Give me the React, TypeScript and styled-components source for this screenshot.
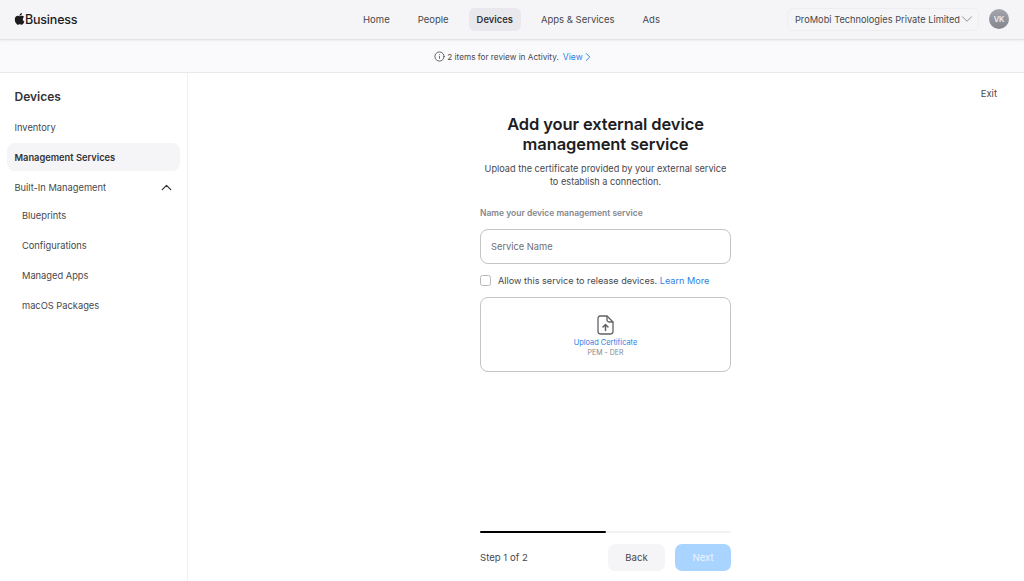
import React from 'react';
import styled, { createGlobalStyle } from 'styled-components';
import { ChevronDown, ChevronRight, ChevronUp, Info } from 'lucide-react';

const GlobalStyle = createGlobalStyle`
  html, body {
    margin: 0;
    height: 100%;
    background: #fff;
  }
  #root {
    height: 100%;
  }
  * {
    box-sizing: border-box;
  }
  body {
    font-family: Inter, "Liberation Sans", sans-serif;
    color: #1d1d1f;
  }
`;

const Page = styled.div`
  display: flex;
  flex-direction: column;
  height: 581px;
  overflow: hidden;
`;

const Header = styled.header`
  flex: 0 0 40px;
  display: grid;
  grid-template-columns: 1fr auto 1fr;
  align-items: center;
  padding: 0 15px 1px 14px;
  background: #f5f5f7;
  border-bottom: 1px solid #e2e2e5;
  box-shadow: 0 1px 2px rgba(0, 0, 0, 0.06);
  position: relative;
  z-index: 1;
`;

const Logo = styled.div`
  display: flex;
  align-items: center;
  font-size: 12.5px;
  font-weight: 500;
  letter-spacing: -0.2px;
  color: #1d1d1f;
`;

const Nav = styled.nav`
  display: flex;
  align-items: center;
`;

const NavItem = styled.a<{ $active?: boolean }>`
  display: flex;
  align-items: center;
  height: 23px;
  padding: 0 8px;
  margin: 0 6px;
  border-radius: 6px;
  font-size: ${(p) => (p.$active ? '9.4px' : '9.5px')};
  font-weight: ${(p) => (p.$active ? 600 : 400)};
  color: ${(p) => (p.$active ? '#333336' : '#48484c')};
  background: ${(p) => (p.$active ? '#e8e8ed' : 'transparent')};
`;

const HeaderRight = styled.div`
  display: flex;
  align-items: center;
  justify-content: flex-end;
  gap: 10px;
`;

const OrgPicker = styled.div`
  display: flex;
  align-items: center;
  height: 23px;
  padding: 0 2.5px 0 7px;
  border: 1px solid #eeeef0;
  border-radius: 6px;
  font-size: 9.25px;
  color: #48484c;
`;

const OrgChevron = styled(ChevronDown)`
  margin-left: -2.5px;
`;

const Avatar = styled.div`
  display: flex;
  align-items: center;
  justify-content: center;
  width: 20px;
  height: 20px;
  border-radius: 50%;
  background: linear-gradient(#a5a5ad, #84848c);
  color: #f0f0f2;
  font-size: 7.5px;
  font-weight: 600;
`;

const Banner = styled.div`
  flex: 0 0 33px;
  display: flex;
  align-items: center;
  justify-content: center;
  gap: 3px;
  padding-top: 1px;
  background: #fafafc;
  border-bottom: 1px solid #e8e8ed;
  font-size: 8.2px;
  color: #48484c;
`;

const BannerInfo = styled(Info)`
  margin-right: -1px;
`;

const BannerLink = styled.a`
  display: inline-flex;
  align-items: center;
  margin-left: 1px;
  font-size: 8.6px;
  color: #2d7fe6;
`;

const BannerChevron = styled(ChevronRight)`
  margin: 0 -5px 0 -2px;
`;

const Body = styled.div`
  flex: 1;
  display: flex;
  min-height: 0;
`;

const Sidebar = styled.aside`
  flex: 0 0 188px;
  display: flex;
  flex-direction: column;
  padding: 15px 7px 0;
  border-right: 1px solid #f0f0f2;
`;

const SideTitle = styled.h2`
  margin: 0 0 8px 7.5px;
  font-size: 12px;
  line-height: 17px;
  font-weight: 600;
  color: #333336;
`;

const SideItem = styled.a<{ $active?: boolean; $nested?: boolean }>`
  display: flex;
  align-items: center;
  justify-content: space-between;
  height: 28px;
  margin-bottom: 2px;
  padding: 0 8px 0 ${(p) => (p.$nested ? '15px' : '7.5px')};
  border-radius: 8px;
  font-size: 9.3px;
  font-weight: ${(p) => (p.$active ? 600 : 400)};
  color: ${(p) => (p.$active ? '#333336' : '#48484c')};
  background: ${(p) => (p.$active ? '#f5f5f7' : 'transparent')};
`;

const SideChevron = styled(ChevronUp)`
  margin-right: -3px;
`;

const SubList = styled.div`
  display: flex;
  flex-direction: column;
  margin-top: -2px;
`;

const Main = styled.main`
  flex: 1;
  display: flex;
  flex-direction: column;
  align-items: center;
  min-width: 0;
  padding-right: 1px;
`;

const ExitRow = styled.div`
  align-self: stretch;
  display: flex;
  justify-content: flex-end;
  padding: 14px 26px 0 0;
  font-size: 9.5px;
  line-height: 13px;
  color: #48484c;
`;

const Form = styled.div`
  flex: 1;
  display: flex;
  flex-direction: column;
  width: 251px;
  padding-top: 14px;
`;

const Title = styled.h1`
  margin: 0 0 8px;
  text-align: center;
  font-size: 16.5px;
  line-height: 20px;
  font-weight: 600;
  letter-spacing: -0.1px;
  color: #1d1d1f;
`;

const Subtitle = styled.p`
  margin: 0 0 19px;
  text-align: center;
  font-size: 9.2px;
  line-height: 13px;
  color: #48484c;
`;

const FieldLabel = styled.label`
  margin-bottom: 10px;
  font-size: 8.5px;
  line-height: 12px;
  font-weight: 600;
  color: #86868b;
`;

const TextBox = styled.div`
  display: flex;
  align-items: center;
  height: 35px;
  padding: 0 10px;
  border: 1px solid #c3c3c8;
  border-radius: 8px;
  font-size: 9.3px;
  color: #6e6e73;
`;

const CheckRow = styled.div`
  display: flex;
  align-items: center;
  gap: 7px;
  margin: 10px 0;
  height: 13px;
  font-size: 9.15px;
  color: #48484c;
`;

const CheckBox = styled.span`
  flex: 0 0 11px;
  height: 11px;
  border: 1px solid #b8b8bd;
  border-radius: 2.5px;
`;

const BlueLink = styled.a`
  color: #2d7fe6;
`;

const UploadBox = styled.div`
  display: flex;
  flex-direction: column;
  align-items: center;
  height: 75px;
  padding-top: 17px;
  border: 1px solid #c3c3c8;
  border-radius: 8px;
`;

const UploadLink = styled.a`
  margin-top: 3px;
  font-size: 7.4px;
  line-height: 10px;
  color: #2d7fe6;
`;

const UploadHint = styled.span`
  font-size: 7px;
  line-height: 10px;
  color: #86868b;
`;

const Footer = styled.div`
  margin-top: auto;
  padding-bottom: 10px;
`;

const Progress = styled.div`
  height: 2px;
  margin-bottom: 11px;
  background: #f2f2f4;
  border-radius: 1px;
`;

const ProgressFill = styled.div`
  width: 50%;
  height: 100%;
  background: #000;
  border-radius: 1px;
`;

const FooterRow = styled.div`
  display: flex;
  align-items: center;
`;

const StepText = styled.span`
  margin-right: auto;
  font-size: 9.6px;
  color: #48484c;
`;

const Button = styled.button<{ $primary?: boolean }>`
  width: ${(p) => (p.$primary ? '56px' : '57px')};
  height: 27px;
  margin-left: ${(p) => (p.$primary ? '10px' : '0')};
  border: 0;
  border-radius: 7px;
  font-family: inherit;
  font-size: 9.6px;
  color: ${(p) => (p.$primary ? '#eaf4ff' : '#48484c')};
  background: ${(p) => (p.$primary ? '#a9d4ff' : '#f5f5f7')};
`;

const AppleLogo = () => (
  <svg width="11" height="12" viewBox="0 0 814 1000" fill="#1d1d1f" aria-hidden="true">
    <path d="M788 341c-6 4-106 61-106 186 0 145 127 196 131 197-1 3-20 70-67 138-42 60-86 120-152 120s-84-39-161-39c-75 0-101 40-162 40s-103-56-152-125C62 778 16 652 16 532c0-192 125-294 248-294 65 0 120 43 161 43 39 0 100-46 174-46 28 0 129 3 189 106zM556 160c31-36 52-87 52-138 0-7-1-14-2-20-50 2-110 33-146 75-28 32-55 83-55 135 0 8 1 16 2 18 3 1 9 2 14 2 45 0 102-30 135-72z" />
  </svg>
);

const UploadIcon = () => (
  <svg width="17" height="20" viewBox="0 0 17 20" fill="none" stroke="#626267" strokeWidth="1.3" strokeLinejoin="round" strokeLinecap="round" aria-hidden="true">
    <path d="M3.2 1H10l6 6v9.6c0 1.3-1 2.4-2.3 2.4H3.2C2 19 1 17.9 1 16.6V3.4C1 2.1 2 1 3.2 1z" />
    <path d="M10 1.2v3.7c0 1.2.9 2.1 2.1 2.1h3.7" />
    <path d="M8.5 15.5V9.8M6 12l2.5-2.5L11 12" strokeWidth="1.5" />
  </svg>
);

export default function App() {
  return (
    <Page>
      <GlobalStyle />
      <Header>
        <Logo>
          <AppleLogo />
          Business
        </Logo>
        <Nav>
          <NavItem>Home</NavItem>
          <NavItem>People</NavItem>
          <NavItem $active>Devices</NavItem>
          <NavItem>Apps &amp; Services</NavItem>
          <NavItem>Ads</NavItem>
        </Nav>
        <HeaderRight>
          <OrgPicker>
            ProMobi Technologies Private Limited
            <OrgChevron size={18} strokeWidth={1} color="#6e6e73" />
          </OrgPicker>
          <Avatar>VK</Avatar>
        </HeaderRight>
      </Header>
      <Banner>
        <BannerInfo size={11} strokeWidth={1.8} color="#48484c" />
        2 items for review in Activity.
        <BannerLink>
          View
          <BannerChevron size={14} strokeWidth={1.6} />
        </BannerLink>
      </Banner>
      <Body>
        <Sidebar>
          <SideTitle>Devices</SideTitle>
          <SideItem>Inventory</SideItem>
          <SideItem $active>Management Services</SideItem>
          <SideItem>
            Built-In Management
            <SideChevron size={17} strokeWidth={1.8} color="#333336" />
          </SideItem>
          <SubList>
            <SideItem $nested>Blueprints</SideItem>
            <SideItem $nested>Configurations</SideItem>
            <SideItem $nested>Managed Apps</SideItem>
            <SideItem $nested>macOS Packages</SideItem>
          </SubList>
        </Sidebar>
        <Main>
          <ExitRow>Exit</ExitRow>
          <Form>
            <Title>
              Add your external device
              <br />
              management service
            </Title>
            <Subtitle>
              Upload the certificate provided by your external service
              <br />
              to establish a connection.
            </Subtitle>
            <FieldLabel>Name your device management service</FieldLabel>
            <TextBox>Service Name</TextBox>
            <CheckRow>
              <CheckBox />
              <span>
                Allow this service to release devices. <BlueLink>Learn More</BlueLink>
              </span>
            </CheckRow>
            <UploadBox>
              <UploadIcon />
              <UploadLink>Upload Certificate</UploadLink>
              <UploadHint>PEM - DER</UploadHint>
            </UploadBox>
            <Footer>
              <Progress>
                <ProgressFill />
              </Progress>
              <FooterRow>
                <StepText>Step 1 of 2</StepText>
                <Button>Back</Button>
                <Button $primary>Next</Button>
              </FooterRow>
            </Footer>
          </Form>
        </Main>
      </Body>
    </Page>
  );
}
